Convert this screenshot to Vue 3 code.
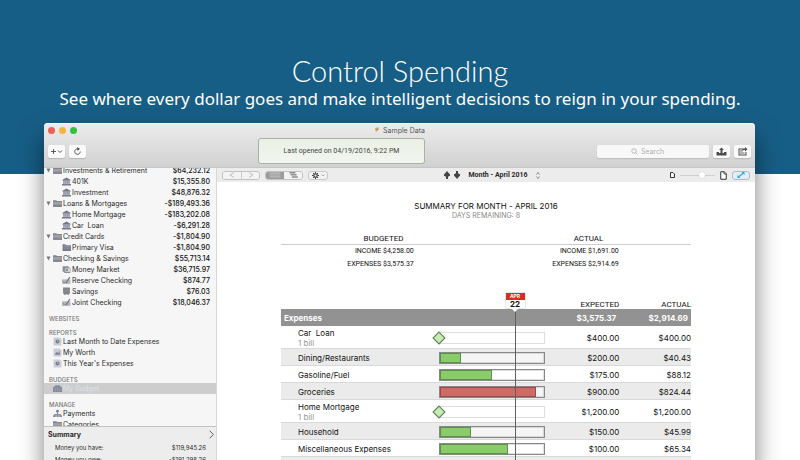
<script setup>
const accounts = [
  { name: 'Investments & Retirement', amount: '$64,232.12', group: true, icon: 'folder' },
  { name: '401K', amount: '$15,355.80', icon: 'bank' },
  { name: 'Investment', amount: '$48,876.32', icon: 'bank' },
  { name: 'Loans & Mortgages', amount: '-$189,493.36', group: true, icon: 'folder' },
  { name: 'Home Mortgage', amount: '-$183,202.08', icon: 'bank' },
  { name: 'Car  Loan', amount: '-$6,291.28', icon: 'bank' },
  { name: 'Credit Cards', amount: '-$1,804.90', group: true, icon: 'folder' },
  { name: 'Primary Visa', amount: '-$1,804.90', icon: 'card' },
  { name: 'Checking & Savings', amount: '$55,713.14', group: true, icon: 'folder' },
  { name: 'Money Market', amount: '$36,715.97', icon: 'money' },
  { name: 'Reserve Checking', amount: '$874.77', icon: 'check' },
  { name: 'Savings', amount: '$76.03', icon: 'safe' },
  { name: 'Joint Checking', amount: '$18,046.37', icon: 'check' },
]

const sections = [
  { title: 'Websites', items: [] },
  {
    title: 'Reports',
    items: [
      { name: 'Last Month to Date Expenses', icon: 'pie' },
      { name: 'My Worth', icon: 'chart' },
      { name: "This Year's Expenses", icon: 'pie' },
    ],
  },
  { title: 'Budgets', items: [{ name: 'My Budget', icon: 'budget', selected: true }] },
  {
    title: 'Manage',
    items: [
      { name: 'Payments', icon: 'payments' },
      { name: 'Categories', icon: 'folder' },
    ],
  },
]

const summary = [
  { label: 'Money you have:', amount: '$119,945.26' },
  { label: 'Money you owe:', amount: '-$191,298.26' },
]

const totals = [
  { title: 'Budgeted', income: '$4,258.00', expenses: '$3,575.37' },
  { title: 'Actual', income: '$1,691.00', expenses: '$2,914.69' },
]

const rows = [
  { name: 'Car  Loan', bill: true, expected: '$400.00', actual: '$400.00' },
  { name: 'Dining/Restaurants', fill: 20, expected: '$200.00', actual: '$40.43' },
  { name: 'Gasoline/Fuel', fill: 50, expected: '$175.00', actual: '$88.12' },
  { name: 'Groceries', fill: 92, over: true, expected: '$900.00', actual: '$824.44' },
  { name: 'Home Mortgage', bill: true, expected: '$1,200.00', actual: '$1,200.00' },
  { name: 'Household', fill: 30, expected: '$150.00', actual: '$45.99' },
  { name: 'Miscellaneous Expenses', fill: 65, expected: '$100.00', actual: '$65.34' },
  { name: 'Phone', fill: 100, expected: '$50.00', actual: '$50.00' },
]

// The bar column starts at 38.5% of the table and is 26% wide.
const today = 38.5 + 26 * (21.3 / 30)
</script>

<template>
  <div class="page">
    <svg class="defs" aria-hidden="true">
      <symbol id="folder" viewBox="0 0 16 14">
        <path d="M0 1h6l1 1.500h9V13H0z" fill="#85878f" />
        <path d="M0 4.500h16V13H0z" fill="#a0a2a9" />
        <path d="M0 9h16v4H0z" fill="#858790" />
      </symbol>
      <symbol id="bank" viewBox="0 0 16 14">
        <path d="M8 0l7 4v1.500H1V4zM2.500 6h2v5h-2zM5.800 6h1.800v5H5.800zM8.600 6h1.800v5H8.600zM11.600 6h2v5h-2zM0 11.500h16V14H0z" fill="#737887" />
        <path d="M2 5h12v7H2z" fill="#9a9eab" opacity=".6" />
      </symbol>
      <symbol id="card" viewBox="0 0 16 14">
        <path d="M1 1h5l1 2h9v10H1z" fill="#777c8c" />
        <path d="M3 5h12M4 8h11" stroke="#a5a9b7" />
      </symbol>
      <symbol id="money" viewBox="0 0 16 14">
        <path d="M1 1h11v3h3v9H4v-2H1z" fill="#8b8f99" />
        <rect x="6" y="5" width="8" height="6" fill="#e0e1e5" />
        <circle cx="9" cy="8" r="2" fill="#7d818c" />
      </symbol>
      <symbol id="check" viewBox="0 0 16 14">
        <path d="M0 5h15v8H0z" fill="#b4b6bd" />
        <path d="M1.500 8l3 2M2 11h8" stroke="#7b7e88" fill="none" />
        <path d="M7 11L14 1" stroke="#6d717c" stroke-width="2" />
      </symbol>
      <symbol id="safe" viewBox="0 0 16 14">
        <path d="M2 0h12v11h-2v2h-2v-1H6v1H4v-2H2z" fill="#7c7f88" />
        <path d="M4 3h8M4 5.500h8M4 8h8" stroke="#999ca5" />
      </symbol>
      <symbol id="pie" viewBox="0 0 16 14">
        <path d="M1 0h11l3 3v11H1z" fill="#c8ced9" />
        <circle cx="8" cy="7" r="3.500" fill="#747a87" />
        <path d="M8 7V3.500M8 7l3 1" stroke="#c3c8d2" />
      </symbol>
      <symbol id="chart" viewBox="0 0 16 14">
        <path d="M1 0h11l3 3v11H1z" fill="#c8ced9" />
        <path d="M4 11V8h2V6h2v2h2V5h2v6z" fill="#7d8391" />
      </symbol>
      <symbol id="budget" viewBox="0 0 16 14">
        <path d="M0 5l5-4h6l5 4v8H0z" fill="#868a9b" />
        <path d="M4 6v6M8 4v8M12 6v6" stroke="#a9adbb" />
      </symbol>
      <symbol id="payments" viewBox="0 0 16 14">
        <circle cx="8" cy="3" r="2.500" fill="#7b7f8c" />
        <path d="M7 5h2v3h5v2H2V8h5zM0 10h5v3H0zM6 10h4v3H6zM11 10h5v3h-5z" fill="#8c90a0" />
      </symbol>
    </svg>

    <header class="hero">
      <h1>Control Spending</h1>
      <p>See where every dollar goes and make intelligent decisions to reign in your spending.</p>
    </header>

    <main class="window">
      <div class="chrome">
        <div class="titlebar">
          <div class="lights"><i class="close"></i><i class="minimize"></i><i class="maximize"></i></div>
          <div class="title">
            <svg viewBox="0 0 12 12" width="6" height="6"><path d="M2 3l3-2h5L9 4H7l-1 6-3-2z" fill="#cfa662" /><path d="M6 4h4l-3 3z" fill="#8c7b58" /></svg>
            Sample Data
          </div>
        </div>
        <div class="tools">
          <div class="group">
            <button class="tool" aria-label="Add">
              <svg viewBox="0 0 34 26" width="17" height="13"><path d="M6 13h10M11 8v10M20 11l4 4 4-4" fill="none" stroke="#4a4a4a" stroke-width="1.800" /></svg>
            </button>
            <button class="tool" aria-label="Refresh">
              <svg viewBox="0 0 34 26" width="17" height="13"><path d="M20 8.500a5.500 5.500 0 1 0 2.500 4.500" fill="none" stroke="#4a4a4a" stroke-width="1.800" /><path d="M16 4.500l6 3-5 4z" fill="#4a4a4a" /></svg>
            </button>
          </div>
          <div class="status">Last opened on 04/19/2016, 9:22 PM</div>
          <div class="group">
            <label class="search">
              <svg viewBox="0 0 14 14" width="7" height="7"><circle cx="6" cy="6" r="4.500" fill="none" stroke="#a4a4a4" stroke-width="1.500" /><path d="M9.500 9.500L13 13" stroke="#a4a4a4" stroke-width="1.500" /></svg>
              <input type="text" placeholder="Search" aria-label="Search" />
            </label>
            <button class="tool" aria-label="Import">
              <svg viewBox="0 0 34 26" width="17" height="13"><path d="M7 14h5v2h3v-6h-3l5-5 5 5h-3v6h3v-2h5v7H7z" fill="#4d4d4d" /></svg>
            </button>
            <button class="tool" aria-label="Share">
              <svg viewBox="0 0 34 26" width="17" height="13"><path d="M9 7h10v2h-8v10h12v-5h2v7H9z" fill="#4d4d4d" /><path d="M12 11h5v2h-5zM12 15h9v2h-9z" fill="#6d6d6d" /><path d="M16 12c0-4 3-5 6-5V4l5 4.500-5 4.500v-3c-3 0-4 0-6 2z" fill="#4d4d4d" /></svg>
            </button>
          </div>
        </div>
      </div>

      <div class="body">
        <aside class="sidebar">
          <nav class="lists">
            <ul class="accounts">
              <li v-for="a in accounts" :key="a.name" :class="{ child: !a.group }">
                <svg v-if="a.group" class="arrow" viewBox="0 0 10 10"><path d="M1 1h8L5 9z" fill="#777" /></svg>
                <svg class="icon"><use :href="'#' + a.icon" /></svg>
                <span class="name">{{ a.name }}</span>
                <span class="amount">{{ a.amount }}</span>
              </li>
            </ul>
            <section v-for="s in sections" :key="s.title">
              <h2>{{ s.title }}</h2>
              <ul>
                <li v-for="i in s.items" :key="i.name" :class="{ selected: i.selected }">
                  <svg class="icon"><use :href="'#' + i.icon" /></svg>
                  <span class="name">{{ i.name }}</span>
                </li>
              </ul>
            </section>
          </nav>
          <section class="summary">
            <button class="summary-head">
              Summary
              <svg viewBox="0 0 8 14" width="5" height="9"><path d="M1 1l6 6-6 6" fill="none" stroke="#555" stroke-width="1.500" /></svg>
            </button>
            <div v-for="s in summary" :key="s.label" class="summary-row">
              <span>{{ s.label }}</span><span>{{ s.amount }}</span>
            </div>
          </section>
        </aside>

        <section class="content">
          <div class="viewbar">
            <div class="view-left">
              <div class="segment">
                <button aria-label="Back"><svg viewBox="0 0 10 10"><path d="M8 1L2 5l6 4" fill="none" stroke="#aaa" stroke-width="1.300" /></svg></button>
                <button class="next" aria-label="Forward"><svg viewBox="0 0 10 10"><path d="M2 1l6 4-6 4" fill="none" stroke="#aaa" stroke-width="1.300" /></svg></button>
              </div>
              <div class="segment">
                <button class="on" aria-label="List"><svg class="wide" viewBox="0 0 20 10"><path d="M1 1h18v2H1zM1 4h18v2H1zM1 7h18v2H1z" fill="#bdbdbd" /></svg></button>
                <button aria-label="Timeline"><svg class="wide" viewBox="0 0 20 10"><path d="M4 0h10v2.500H4zM6 3.500h10V6H6zM8 7h10v2.500H8z" fill="#8f8f8f" /></svg></button>
              </div>
              <button class="gear" aria-label="Options">
                <svg viewBox="0 0 14 14" width="7" height="7"><circle cx="7" cy="7" r="3.500" fill="none" stroke="#444" stroke-width="2.500" /><path d="M7 0v3M7 11v3M0 7h3M11 7h3M2 2l2 2M10 10l2 2M2 12l2-2M10 4l2-2" stroke="#444" stroke-width="2" /></svg>
                <svg viewBox="0 0 8 6" width="4" height="3"><path d="M1 1l3 3 3-3" fill="none" stroke="#888" stroke-width="1.300" /></svg>
              </button>
            </div>
            <div class="period">
              <button aria-label="Previous month"><svg viewBox="0 0 12 16" width="6" height="8"><path d="M6 0l6 7v3H9v2H8v4H4v-4H3v-2H0V7z" fill="#444" /></svg></button>
              <button aria-label="Next month"><svg viewBox="0 0 12 16" width="6" height="8"><path d="M6 16l6-7V6H9V4H8V0H4v4H3v2H0v3z" fill="#444" /></svg></button>
              <strong>Month - April 2016</strong>
              <svg viewBox="0 0 8 14" width="4" height="7"><path d="M1 5l3-4 3 4M1 9l3 4 3-4" fill="none" stroke="#555" stroke-width="1.300" /></svg>
            </div>
            <div class="view-right">
              <svg viewBox="0 0 10 12" width="5" height="6"><path d="M1 1h5l3 3v7H1z" fill="#fff" stroke="#333" stroke-width="2" /></svg>
              <input type="range" min="0" max="100" value="65" aria-label="Zoom" />
              <svg viewBox="0 0 14 18" width="7" height="9"><path d="M1.500 1.500h7l4 4v11h-11z" fill="#fff" stroke="#333" stroke-width="2" /><path d="M8 1v5h5" fill="none" stroke="#333" stroke-width="1.500" /></svg>
              <button class="expand" aria-label="Fit"><svg viewBox="0 0 16 12" width="8" height="6"><path d="M4 9l8-6" stroke="#2fa5dc" stroke-width="2.500" /><path d="M9 0h6v6zM1 6v6h6z" fill="#2fa5dc" /></svg></button>
            </div>
          </div>

          <article class="report">
            <h2>Summary for Month - April 2016</h2>
            <p class="remaining">Days remaining: 8</p>
            <div class="totals">
              <section v-for="t in totals" :key="t.title">
                <h3>{{ t.title }}</h3>
                <div class="figures">
                  <p>INCOME {{ t.income }}</p>
                  <p>EXPENSES {{ t.expenses }}</p>
                </div>
              </section>
            </div>

            <div class="budget">
              <table>
                <colgroup><col class="c-name" /><col class="c-bar" /><col class="c-expected" /><col /></colgroup>
                <thead>
                  <tr class="labels"><td></td><td></td><th>Expected</th><th>Actual</th></tr>
                  <tr class="total"><th>Expenses</th><td></td><td>$3,575.37</td><td>$2,914.69</td></tr>
                </thead>
                <tbody>
                  <tr v-for="r in rows" :key="r.name" :class="{ bill: r.bill }">
                    <td class="label">{{ r.name }}<small v-if="r.bill">1 bill</small></td>
                    <td>
                      <div v-if="r.bill" class="bar open">
                        <svg class="diamond" viewBox="0 0 26 26"><path d="M13 2l11 11-11 11L2 13z" fill="#c5edb2" stroke="#5f7d55" stroke-width="2" /></svg>
                      </div>
                      <div v-else class="bar"><div class="fill" :class="{ over: r.over }" :style="{ width: r.fill + '%' }"></div></div>
                    </td>
                    <td>{{ r.expected }}</td>
                    <td>{{ r.actual }}</td>
                  </tr>
                </tbody>
              </table>
              <div class="today" :style="{ left: today + '%' }">
                <div class="flag"><span class="month">APR</span><span class="day">22</span></div>
              </div>
            </div>
          </article>
        </section>
      </div>
    </main>
  </div>
</template>

<style>
body { margin: 0; }
</style>

<style scoped>
* { box-sizing: border-box; }
h1, h2, h3, p, ul { margin: 0; padding: 0; font-weight: 400; }
ul { list-style: none; }
svg { display: block; flex: none; }
button { margin: 0; padding: 0; border: 0; background: none; font: inherit; color: inherit; }

.page {
  height: 100vh;
  overflow: hidden;
  display: flex;
  flex-direction: column;
  background: linear-gradient(#175e86 174px, #fff 174px);
  font-family: Inter, "Liberation Sans", sans-serif;
  font-size: 7px;
  color: #2b2b2b;
}
.defs { position: absolute; width: 0; height: 0; }

.hero { padding: 55px 20px 12px; text-align: center; color: #fff; white-space: nowrap; }
.hero h1 { font: 300 29px/32px Lato, sans-serif; }
.hero p { font: 400 17px/24px "Noto Sans", sans-serif; }

.window {
  flex: 1;
  min-height: 0;
  margin: 0 45px -10px 44px;
  display: flex;
  flex-direction: column;
  border-radius: 4px 4px 0 0;
  box-shadow: 0 14px 24px rgba(0, 0, 0, 0.5);
}
.chrome {
  padding: 0 4px;
  border-radius: 4px 4px 0 0;
  background: linear-gradient(#ececec, #d0d0d0);
  box-shadow: inset 0 1px #f8f8f8, inset 0 -1px #c6c6c6;
}
.titlebar { height: 14px; display: grid; grid-template-columns: 1fr auto 1fr; align-items: center; }
.lights { display: flex; gap: 4px; }
.lights i { width: 7px; height: 7px; border-radius: 50%; }
.close { background: #ed5f57; }
.minimize { background: #f3b63a; }
.maximize { background: #34c13f; }
.title { display: flex; align-items: center; gap: 3px; color: #555; }
.tools { display: flex; justify-content: space-between; align-items: center; height: 31px; padding-bottom: 3px; }
.group { display: flex; gap: 4px; }
.tool { border-radius: 2px; background: #fafafa; box-shadow: 0 1px 1px rgba(0, 0, 0, 0.15); }
.status {
  width: 167px;
  height: 26px;
  display: grid;
  place-items: center;
  border: 1px solid #a9b3a4;
  border-radius: 3px;
  background: linear-gradient(#e9f0e5, #f2f6ef);
  font-family: Roboto, sans-serif;
  color: #444;
}
.search {
  width: 112px;
  height: 13px;
  display: flex;
  align-items: center;
  justify-content: center;
  gap: 3px;
  border-radius: 2px;
  background: #f8f8f8;
  box-shadow: 0 1px 1px rgba(0, 0, 0, 0.12);
}
.search input { width: 34px; padding: 0; border: 0; outline: 0; background: none; font: inherit; }
.search input::placeholder { color: #b0b0b0; }

.body { flex: 1; min-height: 0; display: flex; }
.sidebar {
  flex: none;
  width: 173px;
  display: flex;
  flex-direction: column;
  border-right: 1px solid #d8d8d8;
  background: #f6f6f6;
}
.lists { flex: 1; min-height: 0; overflow: hidden; }
.accounts { margin-top: -3px; }
.lists li { display: flex; align-items: center; height: 11px; padding: 0 6px 0 9px; white-space: pre; }
.lists .accounts li { padding-left: 2px; }
.lists .accounts .child { padding-left: 18px; }
.arrow { width: 5px; height: 5px; margin-right: 2px; }
.icon { width: 9px; height: 9px; margin-right: 1px; }
.amount { margin-left: auto; font-weight: 500; color: #111; }
.lists h2 { padding: 7px 5px 0; font-size: 6px; font-weight: 500; line-height: 7px; text-transform: uppercase; color: #777; }
.lists .selected { background: #cdcdcd; color: #dde0ea; }
.summary { border-top: 1px solid #c2c2c2; background: #ededed; padding-bottom: 4px; }
.summary-head { width: 100%; height: 15px; padding: 0 2px 0 4px; display: flex; align-items: center; justify-content: space-between; font-weight: 700; }
.summary-row { display: flex; justify-content: space-between; height: 12px; line-height: 12px; padding: 0 10px 0 11px; font-size: 6px; }

.content { flex: 1; min-width: 0; overflow: hidden; background: #fff; }
.viewbar { height: 14px; padding: 0 5px; display: grid; grid-template-columns: 1fr auto 1fr; align-items: center; background: #ececec; }
.view-left, .period, .view-right { display: flex; align-items: center; gap: 5px; }
.period { gap: 4px; padding-left: 12px; }
.period strong { margin: 0 4px; font-family: Roboto, sans-serif; }
.view-right { justify-content: flex-end; }
.segment { display: flex; border: 1px solid #c2c2c2; border-radius: 3px; overflow: hidden; }
.segment button { width: 18px; height: 7px; display: grid; place-items: center; background: #f3f3f3; }
.segment .next { border-left: 1px solid #ccc; }
.segment .on { background: #9b9b9b; }
.segment svg { width: 6px; height: 6px; }
.segment .wide { width: 12px; }
.gear { height: 9px; width: 20px; display: flex; align-items: center; justify-content: center; gap: 2px; border: 1px solid #c8c8c8; border-radius: 3px; background: #f3f3f3; }
.view-right input { appearance: none; width: 35px; height: 6px; margin: 0; background: linear-gradient(#cfcfcf, #cfcfcf) center / 100% 1px no-repeat; }
.view-right input::-webkit-slider-thumb { appearance: none; width: 6px; height: 6px; border-radius: 50%; background: #fff; box-shadow: 0 0 1px #aaa; }
.expand { width: 18px; height: 9px; display: grid; place-items: center; border: 1px solid #b4b9c0; border-radius: 3px; background: #e1eefa; }

.report { padding: 19px 64px 0; text-align: center; color: #111; }
.report h2 { font-size: 8px; line-height: 10px; text-transform: uppercase; }
.remaining { line-height: 9px; text-transform: uppercase; color: #888; }
.totals { display: grid; grid-template-columns: 1fr 1fr; margin: 14px 0 22px; }
.totals h3 { border-bottom: 1px solid #ccc; font: 400 8px/10px Roboto, sans-serif; text-transform: uppercase; }
.figures { display: inline-block; padding-right: 6px; text-align: right; font: 500 7px/13px Roboto, sans-serif; }

.budget { position: relative; }
table { width: 100%; table-layout: fixed; border-collapse: collapse; font-size: 8px; text-align: right; }
.c-name { width: 38.5%; }
.c-bar { width: 26%; }
.c-expected { width: 18%; }
td, th { height: 17px; padding: 0; line-height: 10px; font-weight: 400; }
.labels th, .labels td { height: 16px; vertical-align: bottom; font: 400 8px/9px Roboto, sans-serif; text-transform: uppercase; }
.total { background: #929292; color: #fff; }
.total th { padding-left: 3px; text-align: left; }
.total th, .total td { font-weight: 700; }
.total td { padding-right: 3px; }
tbody tr { background: #fff; box-shadow: inset 0 -1px #d9d9d9; }
tbody tr:nth-child(even) { background: #ebebeb; }
.bill td { height: 23px; }
.label { padding-left: 17px; text-align: left; white-space: pre; }
.label small { display: block; font-size: 8px; color: #999; }
.bar { position: relative; height: 12px; border: 1px solid #888; background: rgba(255, 255, 255, 0.5); box-shadow: inset 0 0 0 1px rgba(0, 0, 0, 0.12); }
.bar.open { border-color: #ddd; box-shadow: none; }
.fill { height: 10px; border: 1px solid #5f8f4f; background: #8acb6a; }
.fill.over { border-color: #9a4b49; background: #cf6b67; }
.diamond { position: absolute; left: -8px; top: -2px; width: 14px; height: 14px; }
.today { position: absolute; top: 0; bottom: 0; width: 0; border-left: 1px solid #606060; }
.flag { position: absolute; top: 0; left: -10px; width: 19px; text-align: center; background: #fff; box-shadow: 0 0 1px #777; }
.flag::after { content: ""; position: absolute; left: 5px; top: 15px; border: 4px solid transparent; border-top-color: #fff; border-bottom: 0; }
.month, .day { display: block; font-weight: 700; }
.month { background: #e02b20; color: #fff; font-size: 5px; line-height: 7px; }
.day { font-size: 8px; line-height: 8px; }
</style>
